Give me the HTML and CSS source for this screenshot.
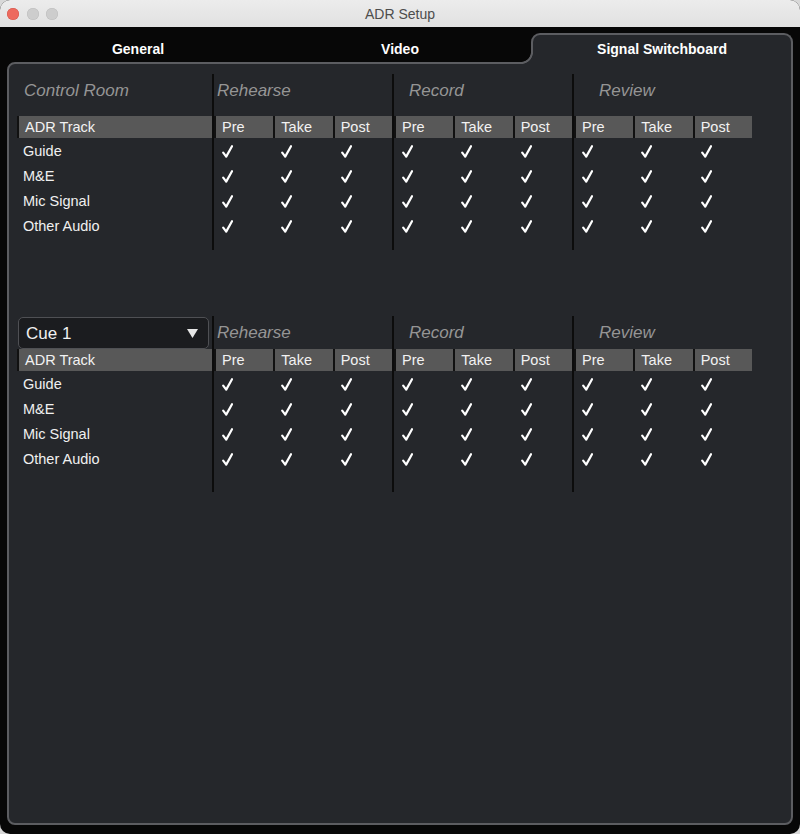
FILE: index.html
```html
<!DOCTYPE html>
<html>
<head>
<meta charset="utf-8">
<title>ADR Setup</title>
<link rel="stylesheet" href="styles.css">
</head>
<body>
<div class="window">
  <div class="titlebar">
    <div class="lights"><span class="light red"></span><span class="light"></span><span class="light"></span></div>
    <div class="title">ADR Setup</div>
    <div></div>
  </div>
  <div class="tabbar">
    <div class="tab">General</div>
    <div class="tab">Video</div>
    <div class="tab active">Signal Switchboard</div>
  </div>
  <div class="panel">
    <!-- Section 1 -->
    <div class="section s1">
      <div class="labelcol">
        <div class="title-area"><span class="stitle">Control Room</span></div>
        <div class="hcell lh">ADR Track</div>
        <div class="row">Guide</div>
        <div class="row">M&amp;E</div>
        <div class="row">Mic Signal</div>
        <div class="row">Other Audio</div>
      </div>
      <div class="group g1">
        <div class="title-area"><span class="stitle">Rehearse</span></div>
        <div class="hcells"><div class="hcell">Pre</div><div class="hcell">Take</div><div class="hcell">Post</div></div>
        <div class="crow"><span class="ck"><svg viewBox="0 0 11 13" width="11" height="13"><path d="M1.2 7.6 L4.2 11.6 L10 1.2"/></svg></span><span class="ck"><svg viewBox="0 0 11 13" width="11" height="13"><path d="M1.2 7.6 L4.2 11.6 L10 1.2"/></svg></span><span class="ck"><svg viewBox="0 0 11 13" width="11" height="13"><path d="M1.2 7.6 L4.2 11.6 L10 1.2"/></svg></span></div>
        <div class="crow"><span class="ck"><svg viewBox="0 0 11 13" width="11" height="13"><path d="M1.2 7.6 L4.2 11.6 L10 1.2"/></svg></span><span class="ck"><svg viewBox="0 0 11 13" width="11" height="13"><path d="M1.2 7.6 L4.2 11.6 L10 1.2"/></svg></span><span class="ck"><svg viewBox="0 0 11 13" width="11" height="13"><path d="M1.2 7.6 L4.2 11.6 L10 1.2"/></svg></span></div>
        <div class="crow"><span class="ck"><svg viewBox="0 0 11 13" width="11" height="13"><path d="M1.2 7.6 L4.2 11.6 L10 1.2"/></svg></span><span class="ck"><svg viewBox="0 0 11 13" width="11" height="13"><path d="M1.2 7.6 L4.2 11.6 L10 1.2"/></svg></span><span class="ck"><svg viewBox="0 0 11 13" width="11" height="13"><path d="M1.2 7.6 L4.2 11.6 L10 1.2"/></svg></span></div>
        <div class="crow"><span class="ck"><svg viewBox="0 0 11 13" width="11" height="13"><path d="M1.2 7.6 L4.2 11.6 L10 1.2"/></svg></span><span class="ck"><svg viewBox="0 0 11 13" width="11" height="13"><path d="M1.2 7.6 L4.2 11.6 L10 1.2"/></svg></span><span class="ck"><svg viewBox="0 0 11 13" width="11" height="13"><path d="M1.2 7.6 L4.2 11.6 L10 1.2"/></svg></span></div>
      </div>
      <div class="group g2">
        <div class="title-area"><span class="stitle">Record</span></div>
        <div class="hcells"><div class="hcell">Pre</div><div class="hcell">Take</div><div class="hcell">Post</div></div>
        <div class="crow"><span class="ck"><svg viewBox="0 0 11 13" width="11" height="13"><path d="M1.2 7.6 L4.2 11.6 L10 1.2"/></svg></span><span class="ck"><svg viewBox="0 0 11 13" width="11" height="13"><path d="M1.2 7.6 L4.2 11.6 L10 1.2"/></svg></span><span class="ck"><svg viewBox="0 0 11 13" width="11" height="13"><path d="M1.2 7.6 L4.2 11.6 L10 1.2"/></svg></span></div>
        <div class="crow"><span class="ck"><svg viewBox="0 0 11 13" width="11" height="13"><path d="M1.2 7.6 L4.2 11.6 L10 1.2"/></svg></span><span class="ck"><svg viewBox="0 0 11 13" width="11" height="13"><path d="M1.2 7.6 L4.2 11.6 L10 1.2"/></svg></span><span class="ck"><svg viewBox="0 0 11 13" width="11" height="13"><path d="M1.2 7.6 L4.2 11.6 L10 1.2"/></svg></span></div>
        <div class="crow"><span class="ck"><svg viewBox="0 0 11 13" width="11" height="13"><path d="M1.2 7.6 L4.2 11.6 L10 1.2"/></svg></span><span class="ck"><svg viewBox="0 0 11 13" width="11" height="13"><path d="M1.2 7.6 L4.2 11.6 L10 1.2"/></svg></span><span class="ck"><svg viewBox="0 0 11 13" width="11" height="13"><path d="M1.2 7.6 L4.2 11.6 L10 1.2"/></svg></span></div>
        <div class="crow"><span class="ck"><svg viewBox="0 0 11 13" width="11" height="13"><path d="M1.2 7.6 L4.2 11.6 L10 1.2"/></svg></span><span class="ck"><svg viewBox="0 0 11 13" width="11" height="13"><path d="M1.2 7.6 L4.2 11.6 L10 1.2"/></svg></span><span class="ck"><svg viewBox="0 0 11 13" width="11" height="13"><path d="M1.2 7.6 L4.2 11.6 L10 1.2"/></svg></span></div>
      </div>
      <div class="group g3">
        <div class="title-area"><span class="stitle">Review</span></div>
        <div class="hcells"><div class="hcell">Pre</div><div class="hcell">Take</div><div class="hcell">Post</div></div>
        <div class="crow"><span class="ck"><svg viewBox="0 0 11 13" width="11" height="13"><path d="M1.2 7.6 L4.2 11.6 L10 1.2"/></svg></span><span class="ck"><svg viewBox="0 0 11 13" width="11" height="13"><path d="M1.2 7.6 L4.2 11.6 L10 1.2"/></svg></span><span class="ck"><svg viewBox="0 0 11 13" width="11" height="13"><path d="M1.2 7.6 L4.2 11.6 L10 1.2"/></svg></span></div>
        <div class="crow"><span class="ck"><svg viewBox="0 0 11 13" width="11" height="13"><path d="M1.2 7.6 L4.2 11.6 L10 1.2"/></svg></span><span class="ck"><svg viewBox="0 0 11 13" width="11" height="13"><path d="M1.2 7.6 L4.2 11.6 L10 1.2"/></svg></span><span class="ck"><svg viewBox="0 0 11 13" width="11" height="13"><path d="M1.2 7.6 L4.2 11.6 L10 1.2"/></svg></span></div>
        <div class="crow"><span class="ck"><svg viewBox="0 0 11 13" width="11" height="13"><path d="M1.2 7.6 L4.2 11.6 L10 1.2"/></svg></span><span class="ck"><svg viewBox="0 0 11 13" width="11" height="13"><path d="M1.2 7.6 L4.2 11.6 L10 1.2"/></svg></span><span class="ck"><svg viewBox="0 0 11 13" width="11" height="13"><path d="M1.2 7.6 L4.2 11.6 L10 1.2"/></svg></span></div>
        <div class="crow"><span class="ck"><svg viewBox="0 0 11 13" width="11" height="13"><path d="M1.2 7.6 L4.2 11.6 L10 1.2"/></svg></span><span class="ck"><svg viewBox="0 0 11 13" width="11" height="13"><path d="M1.2 7.6 L4.2 11.6 L10 1.2"/></svg></span><span class="ck"><svg viewBox="0 0 11 13" width="11" height="13"><path d="M1.2 7.6 L4.2 11.6 L10 1.2"/></svg></span></div>
      </div>
    </div>

    <!-- Section 2 -->
    <div class="section s2">
      <div class="labelcol">
        <div class="title-area dd-area">
          <div class="dropdown"><span class="dd-text">Cue 1</span><svg class="dd-arrow" viewBox="0 0 11 9" width="11" height="9"><polygon points="0,0 11,0 5.5,9"/></svg></div>
        </div>
        <div class="hcell lh">ADR Track</div>
        <div class="row">Guide</div>
        <div class="row">M&amp;E</div>
        <div class="row">Mic Signal</div>
        <div class="row">Other Audio</div>
      </div>
      <div class="group g1">
        <div class="title-area"><span class="stitle">Rehearse</span></div>
        <div class="hcells"><div class="hcell">Pre</div><div class="hcell">Take</div><div class="hcell">Post</div></div>
        <div class="crow"><span class="ck"><svg viewBox="0 0 11 13" width="11" height="13"><path d="M1.2 7.6 L4.2 11.6 L10 1.2"/></svg></span><span class="ck"><svg viewBox="0 0 11 13" width="11" height="13"><path d="M1.2 7.6 L4.2 11.6 L10 1.2"/></svg></span><span class="ck"><svg viewBox="0 0 11 13" width="11" height="13"><path d="M1.2 7.6 L4.2 11.6 L10 1.2"/></svg></span></div>
        <div class="crow"><span class="ck"><svg viewBox="0 0 11 13" width="11" height="13"><path d="M1.2 7.6 L4.2 11.6 L10 1.2"/></svg></span><span class="ck"><svg viewBox="0 0 11 13" width="11" height="13"><path d="M1.2 7.6 L4.2 11.6 L10 1.2"/></svg></span><span class="ck"><svg viewBox="0 0 11 13" width="11" height="13"><path d="M1.2 7.6 L4.2 11.6 L10 1.2"/></svg></span></div>
        <div class="crow"><span class="ck"><svg viewBox="0 0 11 13" width="11" height="13"><path d="M1.2 7.6 L4.2 11.6 L10 1.2"/></svg></span><span class="ck"><svg viewBox="0 0 11 13" width="11" height="13"><path d="M1.2 7.6 L4.2 11.6 L10 1.2"/></svg></span><span class="ck"><svg viewBox="0 0 11 13" width="11" height="13"><path d="M1.2 7.6 L4.2 11.6 L10 1.2"/></svg></span></div>
        <div class="crow"><span class="ck"><svg viewBox="0 0 11 13" width="11" height="13"><path d="M1.2 7.6 L4.2 11.6 L10 1.2"/></svg></span><span class="ck"><svg viewBox="0 0 11 13" width="11" height="13"><path d="M1.2 7.6 L4.2 11.6 L10 1.2"/></svg></span><span class="ck"><svg viewBox="0 0 11 13" width="11" height="13"><path d="M1.2 7.6 L4.2 11.6 L10 1.2"/></svg></span></div>
      </div>
      <div class="group g2">
        <div class="title-area"><span class="stitle">Record</span></div>
        <div class="hcells"><div class="hcell">Pre</div><div class="hcell">Take</div><div class="hcell">Post</div></div>
        <div class="crow"><span class="ck"><svg viewBox="0 0 11 13" width="11" height="13"><path d="M1.2 7.6 L4.2 11.6 L10 1.2"/></svg></span><span class="ck"><svg viewBox="0 0 11 13" width="11" height="13"><path d="M1.2 7.6 L4.2 11.6 L10 1.2"/></svg></span><span class="ck"><svg viewBox="0 0 11 13" width="11" height="13"><path d="M1.2 7.6 L4.2 11.6 L10 1.2"/></svg></span></div>
        <div class="crow"><span class="ck"><svg viewBox="0 0 11 13" width="11" height="13"><path d="M1.2 7.6 L4.2 11.6 L10 1.2"/></svg></span><span class="ck"><svg viewBox="0 0 11 13" width="11" height="13"><path d="M1.2 7.6 L4.2 11.6 L10 1.2"/></svg></span><span class="ck"><svg viewBox="0 0 11 13" width="11" height="13"><path d="M1.2 7.6 L4.2 11.6 L10 1.2"/></svg></span></div>
        <div class="crow"><span class="ck"><svg viewBox="0 0 11 13" width="11" height="13"><path d="M1.2 7.6 L4.2 11.6 L10 1.2"/></svg></span><span class="ck"><svg viewBox="0 0 11 13" width="11" height="13"><path d="M1.2 7.6 L4.2 11.6 L10 1.2"/></svg></span><span class="ck"><svg viewBox="0 0 11 13" width="11" height="13"><path d="M1.2 7.6 L4.2 11.6 L10 1.2"/></svg></span></div>
        <div class="crow"><span class="ck"><svg viewBox="0 0 11 13" width="11" height="13"><path d="M1.2 7.6 L4.2 11.6 L10 1.2"/></svg></span><span class="ck"><svg viewBox="0 0 11 13" width="11" height="13"><path d="M1.2 7.6 L4.2 11.6 L10 1.2"/></svg></span><span class="ck"><svg viewBox="0 0 11 13" width="11" height="13"><path d="M1.2 7.6 L4.2 11.6 L10 1.2"/></svg></span></div>
      </div>
      <div class="group g3">
        <div class="title-area"><span class="stitle">Review</span></div>
        <div class="hcells"><div class="hcell">Pre</div><div class="hcell">Take</div><div class="hcell">Post</div></div>
        <div class="crow"><span class="ck"><svg viewBox="0 0 11 13" width="11" height="13"><path d="M1.2 7.6 L4.2 11.6 L10 1.2"/></svg></span><span class="ck"><svg viewBox="0 0 11 13" width="11" height="13"><path d="M1.2 7.6 L4.2 11.6 L10 1.2"/></svg></span><span class="ck"><svg viewBox="0 0 11 13" width="11" height="13"><path d="M1.2 7.6 L4.2 11.6 L10 1.2"/></svg></span></div>
        <div class="crow"><span class="ck"><svg viewBox="0 0 11 13" width="11" height="13"><path d="M1.2 7.6 L4.2 11.6 L10 1.2"/></svg></span><span class="ck"><svg viewBox="0 0 11 13" width="11" height="13"><path d="M1.2 7.6 L4.2 11.6 L10 1.2"/></svg></span><span class="ck"><svg viewBox="0 0 11 13" width="11" height="13"><path d="M1.2 7.6 L4.2 11.6 L10 1.2"/></svg></span></div>
        <div class="crow"><span class="ck"><svg viewBox="0 0 11 13" width="11" height="13"><path d="M1.2 7.6 L4.2 11.6 L10 1.2"/></svg></span><span class="ck"><svg viewBox="0 0 11 13" width="11" height="13"><path d="M1.2 7.6 L4.2 11.6 L10 1.2"/></svg></span><span class="ck"><svg viewBox="0 0 11 13" width="11" height="13"><path d="M1.2 7.6 L4.2 11.6 L10 1.2"/></svg></span></div>
        <div class="crow"><span class="ck"><svg viewBox="0 0 11 13" width="11" height="13"><path d="M1.2 7.6 L4.2 11.6 L10 1.2"/></svg></span><span class="ck"><svg viewBox="0 0 11 13" width="11" height="13"><path d="M1.2 7.6 L4.2 11.6 L10 1.2"/></svg></span><span class="ck"><svg viewBox="0 0 11 13" width="11" height="13"><path d="M1.2 7.6 L4.2 11.6 L10 1.2"/></svg></span></div>
      </div>
    </div>
  </div>
</div>
</body>
</html>
```

FILE: styles.css
```css
* { box-sizing: border-box; }
html, body { margin: 0; padding: 0; background: #d8d8d8; }
body { font-family: "Liberation Sans", Arial, sans-serif; }

.window {
  width: 800px;
  height: 834px;
  background: #070707;
  border-radius: 10px;
  overflow: hidden;
  display: flex;
  flex-direction: column;
}

/* Title bar */
.titlebar {
  height: 27px;
  flex: none;
  background: linear-gradient(#ececec, #e1e1e1);
  display: grid;
  grid-template-columns: 1fr auto 1fr;
  align-items: center;
  padding-top: 1px;
}
.lights { display: flex; gap: 7.5px; padding-left: 7px; }
.light {
  width: 12px; height: 12px; border-radius: 50%;
  background: #cdcdcd;
  box-shadow: inset 0 0 0 0.5px #bcbcbc;
}
.light.red { background: #ed6a5e; box-shadow: inset 0 0 0 0.5px #d3574c; }
.title { font-size: 14px; color: #4d4d4d; }

/* Tabs */
.tabbar {
  height: 35px;
  flex: none;
  display: flex;
  padding: 0 7px;
  background: #070707;
}
.tab {
  flex: 1;
  text-align: center;
  font-weight: bold;
  font-size: 14px;
  line-height: 17px;
  color: #ffffff;
  padding-top: 14px;
}
.tab.active {
  flex: 0 0 262px;
  margin-top: 6px;
  margin-bottom: -2px;
  padding-top: 6px;
  background: #25272b;
  border: 2px solid #5c5d61;
  border-bottom: none;
  border-radius: 9px 9px 0 0;
  position: relative;
  z-index: 1;
}
.tab.active::before {
  content: "";
  position: absolute;
  left: -12px;
  bottom: 0;
  width: 12px;
  height: 12px;
  background: radial-gradient(circle at 0 0, #070707 9.5px, #5c5d61 10.2px, #5c5d61 11.6px, #25272b 12.3px);
}

/* Panel */
.panel {
  flex: none;
  height: 763px;
  margin: 0 7px;
  border: 2px solid #5c5d61;
  border-radius: 8px 0 8px 8px;
  background: #25272b;
  padding: 10px 0 0 8px;
}

.section { display: flex; }
.s2 { margin-top: 66px; }
.s1 .labelcol, .s1 .group { padding-bottom: 12px; }
.s2 .labelcol, .s2 .group { padding-bottom: 21px; }

.s1 .title-area { height: 42px; }
.s2 .title-area { height: 33px; }

.title-area { padding-top: 7px; }
.stitle {
  font-style: italic;
  font-size: 17px;
  line-height: 20px;
  color: #959595;
  display: block;
}

.labelcol { width: 195px; }
.labelcol .stitle { padding-left: 7px; }

.hcell {
  height: 22px;
  line-height: 22px;
  font-size: 14.5px;
  color: #f2f2f2;
  background: #585858;
  border-left: 2px solid #111111;
  padding-left: 6px;
  white-space: nowrap;
}

.row {
  height: 25px;
  line-height: 25px;
  padding-top: 1px;
  font-size: 14.5px;
  color: #f0f0f0;
  padding-left: 6px;
}

.group {
  width: 180px;
  border-left: 2px solid #0c0c0c;
}
.g1 .stitle { padding-left: 3px; }
.g2 .stitle { padding-left: 15px; }
.g3 .stitle { padding-left: 25px; }

.hcells {
  display: grid;
  grid-template-columns: 1fr 1fr 1fr;
}

.crow {
  display: grid;
  grid-template-columns: 1fr 1fr 1fr;
  height: 25px;
  align-items: center;
  padding-top: 1px;
}
.ck { padding-left: 8px; display: flex; align-items: center; }
.ck svg { display: block; }
.ck path {
  fill: none;
  stroke: #ffffff;
  stroke-width: 2.2;
  stroke-linecap: round;
  stroke-linejoin: round;
}

/* Dropdown */
.s2 .dd-area { padding-top: 1px; }
.dropdown {
  width: 191px;
  height: 32px;
  margin-left: 1px;
  background: #1b1c1f;
  border: 1px solid #4f5054;
  border-radius: 5px;
  display: flex;
  align-items: center;
  justify-content: space-between;
  padding: 0 10px 0 7px;
}
.dd-text { font-size: 17px; color: #f0f0f0; padding-top: 1px; }
.dd-arrow polygon { fill: #e6e6e6; }
```
